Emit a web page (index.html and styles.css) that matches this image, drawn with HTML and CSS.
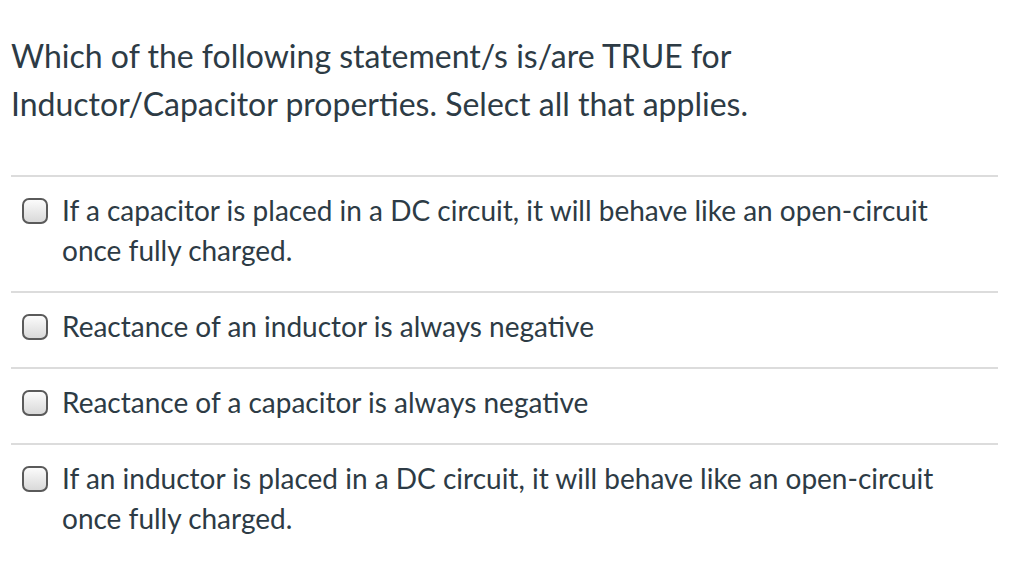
FILE: index.html
```html
<!DOCTYPE html>
<html>
<head>
<meta charset="utf-8">
<link rel="stylesheet" href="styles.css">
</head>
<body>
<div class="question">
  <div class="prompt">Which of the following statement/s is/are TRUE for<br>Inductor/Capacitor properties. Select all that applies.</div>
  <div class="answers">
    <label class="answer">
      <span class="box"></span>
      <span class="text">If a capacitor is placed in a DC circuit, it will behave like an open-circuit<br>once fully charged.</span>
    </label>
    <label class="answer">
      <span class="box"></span>
      <span class="text">Reactance of an inductor is always negative</span>
    </label>
    <label class="answer">
      <span class="box"></span>
      <span class="text">Reactance of a capacitor is always negative</span>
    </label>
    <label class="answer">
      <span class="box"></span>
      <span class="text">If an inductor is placed in a DC circuit, it will behave like an open-circuit<br>once fully charged.</span>
    </label>
  </div>
</div>
</body>
</html>
```
FILE: styles.css
```css
html, body {
  margin: 0;
  padding: 0;
  background: #ffffff;
}
body {
  font-family: Lato, "Open Sans", sans-serif;
  color: #2d3b45;
}
.question {
  width: 987px;
  padding: 32px 0 0 11px;
}
.prompt {
  font-size: 32px;
  line-height: 48px;
  margin-bottom: 47px;
}
.answers {
  display: flex;
  flex-direction: column;
}
.answer {
  display: flex;
  align-items: flex-start;
  border-top: 2px solid #dcdcdc;
  padding: 13px 0 21px 11px;
}
.box {
  flex: none;
  width: 22px;
  height: 22px;
  margin-top: 8px;
  margin-right: 14px;
  border: 2px solid #5a5a5a;
  border-radius: 7px;
  background: linear-gradient(#fbfbfb, #d9d9d9);
}
.text {
  font-size: 28px;
  line-height: 40px;
}
```
